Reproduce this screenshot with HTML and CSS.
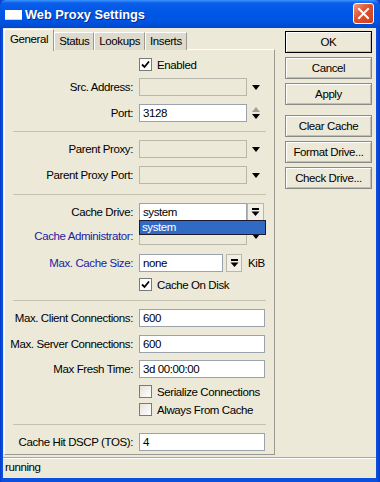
FILE: index.html
```html
<!DOCTYPE html>
<html lang="en">
<head>
  <meta charset="UTF-8" />
  <meta name="viewport" content="width=device-width,initial-scale=1.0" />
  <title>Web Proxy Settings</title>
  <link rel="stylesheet" href="styles.css">
</head>
<body>
  <div class="window">

    <!-- Title bar -->
    <div class="titlebar">
      <span class="app-icon"></span>
      <span class="title">Web Proxy Settings</span>
      <span class="close-btn">
        <svg width="13" height="13" viewBox="0 0 13 13"><path d="M2 2 L11 11 M11 2 L2 11" stroke="#fff" stroke-width="2" stroke-linecap="square"/></svg>
      </span>
    </div>

    <div class="frame">
      <div class="client">

        <!-- Tabs + General page -->
        <div class="main">
          <div class="tabs">
            <div class="tab active">General</div>
            <div class="tab">Status</div>
            <div class="tab">Lookups</div>
            <div class="tab">Inserts</div>
          </div>

          <div class="panel">
            <div class="check-row first">
              <span class="checkbox checked"><svg width="9" height="9" viewBox="0 0 9 9"><path d="M1 4.5 L3.5 7 L8 1.5" fill="none" stroke="#000" stroke-width="1.8"/></svg></span>
              <span>Enabled</span>
            </div>
            <div class="row mt7">
              <label class="label">Src. Address:</label>
              <div class="field disabled"></div>
              <span class="arrow-cell"><span class="tri-down"></span></span>
            </div>
            <div class="row">
              <label class="label">Port:</label>
              <div class="field">3128</div>
              <span class="arrow-cell spin"><span class="tri-up"></span><span class="tri-down"></span></span>
            </div>

            <div class="sep"></div>

            <div class="row">
              <label class="label">Parent Proxy:</label>
              <div class="field disabled"></div>
              <span class="arrow-cell"><span class="tri-down"></span></span>
            </div>
            <div class="row">
              <label class="label">Parent Proxy Port:</label>
              <div class="field disabled"></div>
              <span class="arrow-cell"><span class="tri-down"></span></span>
            </div>

            <div class="sep sep-wide"></div>

            <div class="row">
              <label class="label">Cache Drive:</label>
              <div class="combo">
                <div class="field">system</div>
                <span class="drop-btn"><svg width="9" height="9" viewBox="0 0 9 9"><rect x="1" y="0" width="7" height="2" fill="#000"/><path d="M0.5 3.5 H8.5 L4.5 8 Z" fill="#000"/></svg></span>
                <div class="popup">system</div>
              </div>
            </div>
            <div class="row mt6">
              <label class="label link">Cache Administrator:</label>
              <div class="field disabled"></div>
              <span class="arrow-cell"><span class="tri-down"></span></span>
            </div>
            <div class="row mt9">
              <label class="label link">Max. Cache Size:</label>
              <div class="field short">none</div>
              <span class="drop-btn small"><svg width="9" height="9" viewBox="0 0 9 9"><rect x="1" y="0" width="7" height="2" fill="#000"/><path d="M0.5 3.5 H8.5 L4.5 8 Z" fill="#000"/></svg></span>
              <span class="unit">KiB</span>
            </div>
            <div class="check-row mt6">
              <span class="checkbox checked"><svg width="9" height="9" viewBox="0 0 9 9"><path d="M1 4.5 L3.5 7 L8 1.5" fill="none" stroke="#000" stroke-width="1.8"/></svg></span>
              <span>Cache On Disk</span>
            </div>

            <div class="sep sep-tight"></div>

            <div class="row">
              <label class="label">Max. Client Connections:</label>
              <div class="field wide">600</div>
            </div>
            <div class="row">
              <label class="label">Max. Server Connections:</label>
              <div class="field wide">600</div>
            </div>
            <div class="row mt7">
              <label class="label">Max Fresh Time:</label>
              <div class="field wide">3d 00:00:00</div>
            </div>
            <div class="check-row">
              <span class="checkbox"></span>
              <span>Serialize Connections</span>
            </div>
            <div class="check-row">
              <span class="checkbox"></span>
              <span>Always From Cache</span>
            </div>

            <div class="sep sep-short"></div>

            <div class="row">
              <label class="label">Cache Hit DSCP (TOS):</label>
              <div class="field wide">4</div>
            </div>
          </div>
        </div>

        <!-- Dialog buttons -->
        <div class="buttons">
          <button class="btn default">OK</button>
          <button class="btn">Cancel</button>
          <button class="btn">Apply</button>
          <button class="btn group">Clear Cache</button>
          <button class="btn">Format Drive...</button>
          <button class="btn">Check Drive...</button>
        </div>
      </div>

      <div class="status">running</div>
    </div>
  </div>
</body>
</html>
```

FILE: styles.css
```css
body {
  margin: 0;
  font-family: "Liberation Sans", Arial, sans-serif;
  font-size: 11.5px;
  letter-spacing: -0.4px;
  color: #000;
  background: #fff;
}
.window {
  width: 380px;
  height: 482px;
  display: flex;
  flex-direction: column;
  background: linear-gradient(90deg, #0838c8 0, #0a50dc 2px, #0a50dc 377px, #0838c8 380px);
}
.titlebar {
  height: 28px;
  display: flex;
  align-items: center;
  padding: 0 6px 0 5px;
  background: linear-gradient(#3d95ff 0, #0a5ee8 3px, #0058e6 40%, #0054e2 75%, #0048cc 100%);
  border-radius: 6px 6px 0 0;
}
.app-icon {
  width: 17px;
  height: 9px;
  background: #fff;
  border-bottom: 1px solid #c8d0e0;
  margin-right: 3px;
  margin-top: 1px;
}
.title {
  color: #fff;
  font-weight: bold;
  font-size: 12.8px;
  letter-spacing: 0;
  text-shadow: 1px 1px #0a2a8c;
}
.close-btn {
  margin-left: auto;
  width: 19px;
  height: 19px;
  border: 1px solid #fff;
  border-radius: 3px;
  background: linear-gradient(135deg, #f09a7e 0, #e0502e 45%, #c8401e 100%);
  display: flex;
  align-items: center;
  justify-content: center;
  margin-top: -1px;
}
.frame {
  flex: 1;
  margin: 0 4px 4px 3px;
  background: #ece9d8;
  display: flex;
  flex-direction: column;
}
.client {
  display: flex;
  height: 427px;
}
.main {
  width: 271px;
  margin-left: 1px;
}
.tabs {
  display: flex;
  align-items: flex-end;
  height: 21px;
  margin-top: 1px;
  position: relative;
  z-index: 1;
}
.tab {
  height: 18px;
  line-height: 17px;
  padding: 0 4px;
  background: #dedbcd;
  border-top: 1px solid #fff;
  border-left: 1px solid #fff;
  border-right: 1px solid #9c9a90;
  box-sizing: border-box;
}
.tab.active {
  height: 22px;
  line-height: 19px;
  padding: 0 5px;
  background: #ece9d8;
  margin-bottom: -1px;
}
.panel {
  height: 406px;
  margin-top: -1px;
  box-sizing: border-box;
  border-top: 1px solid #fff;
  border-left: 1px solid #fff;
  border-right: 1px solid #9c9a90;
  border-bottom: 1px solid #9c9a90;
  padding-top: 8px;
}
.row {
  display: flex;
  align-items: center;
  height: 18px;
  margin-top: 8px;
}
.row.mt6 {
  margin-top: 6px;
}
.row.mt7 {
  margin-top: 7px;
}
.row.mt9 {
  margin-top: 9px;
}
.check-row {
  display: flex;
  align-items: center;
  gap: 5px;
  height: 13px;
  margin-top: 7px;
  padding-left: 134px;
}
.check-row + .check-row {
  margin-top: 5px;
}
.check-row.first {
  margin-top: 0;
}
.check-row.mt6 {
  margin-top: 6px;
}
.label {
  width: 128px;
  padding-right: 1px;
  margin-right: 5px;
  text-align: right;
  flex-shrink: 0;
}
.label.link {
  color: #1c1ca4;
}
.field {
  width: 108px;
  height: 18px;
  box-sizing: border-box;
  border: 1px solid #9aa3ab;
  background: #fff;
  padding-left: 3px;
  line-height: 16px;
}
.field.disabled {
  background: #ece9d8;
  border-color: #b9b7ac;
}
.field.wide {
  width: 126px;
}
.field.short {
  width: 84px;
}
.arrow-cell {
  width: 18px;
  height: 18px;
  display: flex;
  flex-direction: column;
  align-items: center;
  justify-content: center;
  gap: 2px;
}
.tri-down {
  width: 0;
  height: 0;
  border-left: 4.5px solid transparent;
  border-right: 4.5px solid transparent;
  border-top: 5px solid #000;
}
.tri-up {
  width: 0;
  height: 0;
  border-left: 4.5px solid transparent;
  border-right: 4.5px solid transparent;
  border-bottom: 5px solid #a09e96;
}
.combo {
  display: flex;
  position: relative;
}
.drop-btn {
  width: 17px;
  height: 18px;
  box-sizing: border-box;
  border: 1px solid #b9b7ac;
  background: #f2f0e6;
  display: flex;
  align-items: center;
  justify-content: center;
}
.drop-btn.small {
  width: 16px;
  margin-left: 3px;
}
.unit {
  margin-left: 6px;
}
.popup {
  position: absolute;
  left: 0;
  top: 17px;
  width: 127px;
  height: 15px;
  box-sizing: border-box;
  background: #316ac5;
  border: 1px solid #1a1a2a;
  color: #fff;
  padding-left: 2px;
  line-height: 12px;
}
.checkbox {
  width: 13px;
  height: 13px;
  box-sizing: border-box;
  border: 1px solid #7a7a7a;
  background: linear-gradient(135deg, #e4e2da 0, #fff 100%);
  display: flex;
  align-items: center;
  justify-content: center;
}
.checkbox.checked {
  background: #fff;
}
.sep {
  height: 1px;
  background: #c5c2b2;
  margin: 9px 8px 7px 8px;
}
.sep.sep-wide {
  margin-top: 10px;
  margin-bottom: 8px;
}
.sep.sep-tight {
  margin-top: 9px;
  margin-bottom: 3px;
}
.sep.sep-short {
  margin-top: 8px;
}
.buttons {
  width: 87px;
  margin-left: 10px;
  padding-top: 3px;
  display: flex;
  flex-direction: column;
  gap: 4px;
}
.btn {
  height: 22px;
  font-family: inherit;
  font-size: 11.5px;
  letter-spacing: -0.4px;
  background: #ece9d8;
  border: 1px solid #8a8a86;
  box-shadow: inset 1px 1px #fff, inset -1px -1px #c2bfb0;
  padding: 0;
  color: #000;
}
.btn.default {
  border-color: #000;
}
.btn.group {
  margin-top: 6px;
}
.status {
  margin-top: 2px;
  border-top: 1px solid #aca899;
  box-shadow: inset 0 1px #fff;
  height: 20px;
  line-height: 19px;
  padding-left: 2px;
}
```
